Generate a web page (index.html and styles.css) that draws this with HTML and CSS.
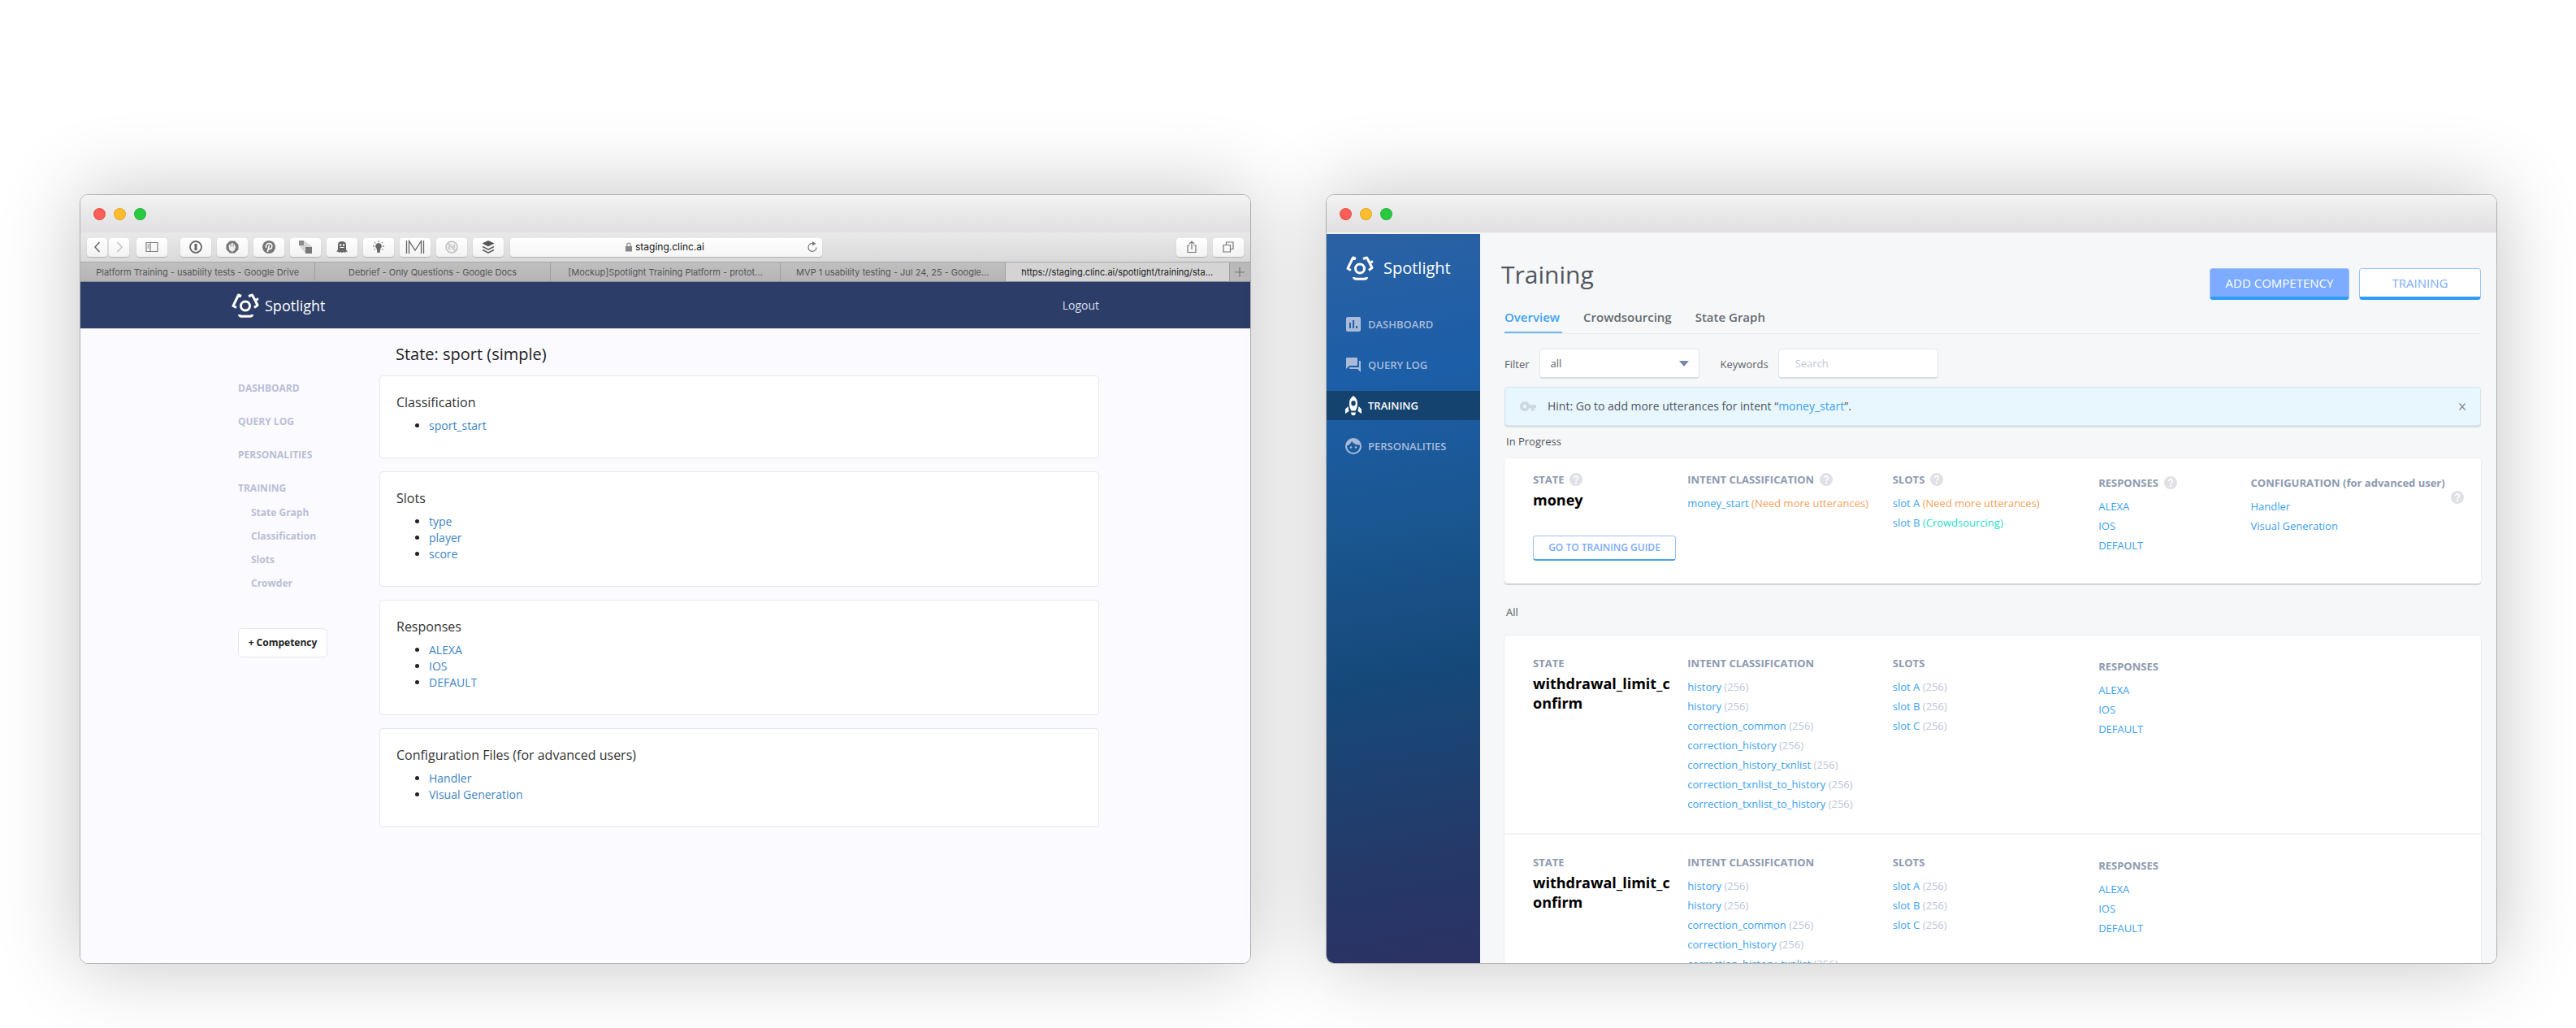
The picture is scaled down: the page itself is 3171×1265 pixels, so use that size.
FILE: index.html
```html
<!DOCTYPE html>
<html lang="en">
<head>
<meta charset="utf-8">
<title>Spotlight Training Platform</title>
<link rel="stylesheet" href="styles.css">
</head>
<body>
<svg class="defs" aria-hidden="true">
  <symbol id="logo" viewBox="0 0 34 30">
    <g fill="none" stroke="#fff" stroke-width="3" stroke-linejoin="round">
      <circle cx="17" cy="15.500" r="5.500"/>
      <path d="M12 3.500L8.500 2 2 15.500l4 2M21 3.500L25.500 2 29 8.500M33 6.500l-4.500 2.500M29 8.500L32 14.500l-4 3"/>
      <path d="M9.500 26q0 2.200 3 2.200h10q3 0 3-2.200"/>
    </g>
  </symbol>
  <symbol id="help" viewBox="0 0 16 16">
    <circle cx="8" cy="8" r="8" fill="#dfe1e6"/>
    <path d="M5.600 6.200a2.400 2.200 0 1 1 3.700 1.800Q8 8.700 8 9.900" fill="none" stroke="#fff" stroke-width="1.600"/>
    <circle cx="8" cy="12.200" r="1.100" fill="#fff"/>
  </symbol>
</svg>

<main class="stage">
  <section class="window" aria-label="Current design">
    <div class="titlebar"><i class="dot red"></i><i class="dot amber"></i><i class="dot green"></i></div>
    <div class="toolbar">
      <div class="history">
        <button class="tool narrow" aria-label="Back"><svg width="16" height="16" viewBox="0 0 16 16"><path d="M10.500 2L5 8l5.500 6" fill="none" stroke="#666" stroke-width="1.500"/></svg></button>
        <button class="tool narrow" aria-label="Forward"><svg width="16" height="16" viewBox="0 0 16 16"><path d="M5.500 2L11 8l-5.500 6" fill="none" stroke="#c2c2c2" stroke-width="1.500"/></svg></button>
      </div>
      <button class="tool sidebar-toggle" aria-label="Sidebar"><svg width="16" height="14" viewBox="0 0 16 14"><path d="M1 1.500h14v11H1zM6 1.500v11M2.500 4h2M2.500 6h2M2.500 8h2" fill="none" stroke="#808080" stroke-width="1.200"/></svg></button>
      <div class="extensions">
        <button class="tool" aria-label="Passwords"><svg width="16" height="16" viewBox="0 0 16 16"><circle cx="8" cy="8" r="7" fill="none" stroke="#666" stroke-width="1.800"/><path d="M6.400 4h3.200v3.500L9 8l.6.600V12H6.400V8.500L7 8l-.6-.6z" fill="#666"/></svg></button>
        <button class="tool" aria-label="Blocker"><svg width="16" height="16" viewBox="0 0 16 16"><path d="M5 .5h6L15.500 5v6L11 15.500H5L.5 11V5z" fill="#777"/><path d="M4.500 8V5M6.500 8V3.500M8.500 8V3M10.500 8V4.500" stroke="#eee" stroke-width="1.500"/><path d="M3.800 7.500h7.400l1.500-1-2 5.500-2 1.500h-2L4 11z" fill="#eee"/></svg></button>
        <button class="tool" aria-label="Pin"><svg width="16" height="16" viewBox="0 0 16 16"><circle cx="8" cy="8" r="8" fill="#777"/><path d="M4.800 8.800C3.500 6 5.500 3.600 8.200 3.600c3.600 0 4.500 3.200 3 5.600-1.200 1.800-3 1.500-3.600.3M8.400 6L6.300 14" fill="none" stroke="#fff" stroke-width="1.600"/></svg></button>
        <button class="tool" aria-label="Transfer"><svg width="18" height="16" viewBox="0 0 18 16"><path d="M1 0h6l10 7v9H9L1 6z" fill="#d6d6d6"/><path d="M1 0h6v6H1z" fill="#8a8a8a"/><path d="M9 8h8v8H9z" fill="#777"/></svg></button>
        <button class="tool" aria-label="Ghost"><svg width="14" height="16" viewBox="0 0 14 16"><path d="M2 5Q2 1 7 1t5 4v6l2 3-2-.5-1 1.500-2-1-2 1-2-1-2 1-1-1.500L0 14l2-3z" fill="#666"/><circle cx="5" cy="5.500" r="1.200" fill="#fff"/><circle cx="9" cy="5.500" r="1.200" fill="#fff"/><path d="M4.500 8.500h5" stroke="#fff"/></svg></button>
        <button class="tool" aria-label="Hints"><svg width="16" height="16" viewBox="0 0 16 16"><path d="M8 3a4 4 0 0 1 2.300 7.200L9.500 15h-3l-.8-4.800A4 4 0 0 1 8 3z" fill="#666"/><path d="M8 0v2M3 2l1.200 1.200M13 2l-1.200 1.200M1 7h2M13 7h2M2.500 11.500L4 10.500M13.500 11.500L12 10.500" stroke="#888" stroke-width="1.300"/></svg></button>
        <button class="tool" aria-label="Mail"><svg width="24" height="18" viewBox="0 0 24 18"><path d="M1.500 17V1M4.500 17V1.500L12 13l7.500-11.500V17M22.500 17V1" fill="none" stroke="#666" stroke-width="1.300"/></svg></button>
        <button class="tool" aria-label="Disabled"><svg width="16" height="16" viewBox="0 0 16 16"><circle cx="8" cy="8" r="7" fill="#eee" stroke="#c0c0c0" stroke-width="1.600"/><path d="M3.500 3.500l9 9M5 11V7M11 5v4" stroke="#c0c0c0" stroke-width="1.500"/></svg></button>
        <button class="tool" aria-label="Layers"><svg width="16" height="16" viewBox="0 0 16 16"><path d="M8 0l7.500 3.500L8 7.200.5 3.500z" fill="#555"/><path d="M1 7.500L8 11l7-3.500M1 11.500L8 15l7-3.500" fill="none" stroke="#666" stroke-width="1.800"/></svg></button>
      </div>
      <div class="address">
        <svg width="10" height="12" viewBox="0 0 10 12"><path d="M1 5h8v6.500H1z" fill="#888"/><path d="M2.800 5V3.200a2.200 2.200 0 0 1 4.400 0V5" fill="none" stroke="#888" stroke-width="1.200"/></svg>
        <input class="address-input" type="text" value="staging.clinc.ai" aria-label="Address">
        <button class="reload" aria-label="Reload"><svg width="14" height="14" viewBox="0 0 14 14"><path d="M8.500 2.600A5 5 0 1 0 12 7.500" fill="none" stroke="#777" stroke-width="1.200"/><path d="M7 0l4.500 3L7 5.500z" fill="#777"/></svg></button>
      </div>
      <div class="window-tools">
        <button class="tool" aria-label="Share"><svg width="14" height="16" viewBox="0 0 14 16"><path d="M4.500 6H2v8.500h10V6H9.500M7 11V1.500M4 4.200l3-3 3 3" fill="none" stroke="#777" stroke-width="1.200"/></svg></button>
        <button class="tool" aria-label="Show tabs"><svg width="14" height="14" viewBox="0 0 14 14"><path d="M1 4.500h8.500V13H1zM4.500 4.500V1H13v8.500H9.500" fill="none" stroke="#777" stroke-width="1.200"/></svg></button>
      </div>
    </div>
    <div class="browser-tabs">
      <button class="browser-tab">Platform Training - usability tests - Google Drive</button>
      <button class="browser-tab">Debrief - Only Questions - Google Docs</button>
      <button class="browser-tab">[Mockup]Spotlight Training Platform - protot...</button>
      <button class="browser-tab">MVP 1 usability testing - Jul 24, 25 - Google...</button>
      <button class="browser-tab current">https://staging.clinc.ai/spotlight/training/sta...</button>
      <button class="new-tab" aria-label="New tab"><svg width="12" height="12" viewBox="0 0 12 12"><path d="M6 0v12M0 6h12" stroke="#777" stroke-width="1.200"/></svg></button>
    </div>
    <div class="old-app">
      <header class="old-nav">
        <div class="container old-nav-row">
          <a class="old-brand" href="#"><svg width="34" height="30"><use href="#logo"/></svg>Spotlight</a>
          <a class="logout" href="#">Logout</a>
        </div>
      </header>
      <div class="container old-layout">
        <nav class="old-side">
          <ul class="old-menu">
            <li><a href="#">DASHBOARD</a></li>
            <li><a href="#">QUERY LOG</a></li>
            <li><a href="#">PERSONALITIES</a></li>
            <li><a href="#">TRAINING</a>
              <ul class="old-submenu">
                <li><a href="#">State Graph</a></li>
                <li><a href="#">Classification</a></li>
                <li><a href="#">Slots</a></li>
                <li><a href="#">Crowder</a></li>
              </ul>
            </li>
          </ul>
          <button class="old-add">+ Competency</button>
        </nav>
        <div class="old-main">
          <h1>State: sport (simple)</h1>
          <section class="panel"><h2>Classification</h2><ul><li><a href="#">sport_start</a></li></ul></section>
          <section class="panel"><h2>Slots</h2><ul><li><a href="#">type</a></li><li><a href="#">player</a></li><li><a href="#">score</a></li></ul></section>
          <section class="panel"><h2>Responses</h2><ul><li><a href="#">ALEXA</a></li><li><a href="#">IOS</a></li><li><a href="#">DEFAULT</a></li></ul></section>
          <section class="panel"><h2>Configuration Files (for advanced users)</h2><ul><li><a href="#">Handler</a></li><li><a href="#">Visual Generation</a></li></ul></section>
        </div>
      </div>
    </div>
  </section>

  <section class="window" aria-label="New design">
    <div class="titlebar"><i class="dot red"></i><i class="dot amber"></i><i class="dot green"></i></div>
    <div class="app">
      <nav class="side">
        <a class="brand" href="#"><svg width="34" height="30"><use href="#logo"/></svg>Spotlight</a>
        <ul class="menu">
          <li><a href="#"><svg width="20" height="20" viewBox="0 0 20 20"><path fill-rule="evenodd" d="M3 1h14q2 0 2 2v14q0 2-2 2H3q-2 0-2-2V3q0-2 2-2zm2 7v7h2V8zm4-3v10h2V5zm4 7v3h2v-3z" fill="#a9bbd9"/></svg>DASHBOARD</a></li>
          <li><a href="#"><svg width="20" height="20" viewBox="0 0 20 20"><path d="M2 1h12q1 0 1 1v8q0 1-1 1H5l-4 4V2q0-1 1-1zM17 5h1q1 0 1 1v13l-4-4H6q-1 0-1-1v-1h12z" fill="#a9bbd9"/></svg>QUERY LOG</a></li>
          <li><a class="active" href="#"><svg width="20" height="24" viewBox="0 0 20 24"><path fill-rule="evenodd" d="M10 0c4 3 5 6 5 9.500 0 4-1 6.500-2.500 9h-5C6 16 5 13.500 5 9.500 5 6 6 3 10 0zm0 6a2.700 3.200 0 1 0 0 6.400A2.700 3.200 0 0 0 10 6z" fill="#fff"/><path d="M3.500 13L0 16.500V22l4.500-3zM16.500 13l3.500 3.500V22l-4.500-3zM7 20.500h6L12 24H8z" fill="#fff"/></svg>TRAINING</a></li>
          <li><a href="#"><svg width="20" height="20" viewBox="0 0 20 20"><circle cx="10" cy="10" r="9" fill="none" stroke="#a9bbd9" stroke-width="2"/><path d="M1 10Q6 8.500 8 4q4 5 10.500 4.500L17 4l-7-3-7 3z" fill="#a9bbd9"/><circle cx="7" cy="11.500" r="1.300" fill="#a9bbd9"/><circle cx="13" cy="11.500" r="1.300" fill="#a9bbd9"/></svg>PERSONALITIES</a></li>
        </ul>
      </nav>
      <div class="content">
        <header class="page-head">
          <h1>Training</h1>
          <div class="actions">
            <button class="btn primary">ADD COMPETENCY</button>
            <button class="btn">TRAINING</button>
          </div>
        </header>
        <div class="page-body">
          <nav class="tabs"><a class="selected" href="#">Overview</a><a href="#">Crowdsourcing</a><a href="#">State Graph</a></nav>
          <form class="filters">
            <label for="filter">Filter</label>
            <select id="filter"><option>all</option></select>
            <label for="keywords">Keywords</label>
            <input id="keywords" type="text" placeholder="Search">
          </form>
          <div class="hint">
            <svg width="20" height="12" viewBox="0 0 20 12"><path fill-rule="evenodd" d="M6 0a6 6 0 0 1 5.600 4H20v4h-2v3.500h-4V8h-2.400A6 6 0 1 1 6 0zm0 3.800a2.200 2.200 0 1 0 0 4.400 2.200 2.200 0 0 0 0-4.400z" fill="#ccd8e0"/></svg>
            <p>Hint: Go to add more utterances for intent “<a href="#">money_start</a>”.</p>
            <button class="close" aria-label="Close"><svg width="8" height="9" viewBox="0 0 8 9"><path d="M.5 0.500l7 8M7.500 0.500l-7 8" stroke="#888" stroke-width="1.200"/></svg></button>
          </div>
          <h2 class="group-title">In Progress</h2>
          <div class="card progress">
            <article class="row">
              <div><h3>STATE <svg width="16" height="16"><use href="#help"/></svg></h3><p class="name">money</p><button class="btn small">GO TO TRAINING GUIDE</button></div>
              <div><h3>INTENT CLASSIFICATION <svg width="16" height="16"><use href="#help"/></svg></h3><ul><li><a href="#">money_start</a> <span class="warn">(Need more utterances)</span></li></ul></div>
              <div><h3>SLOTS <svg width="16" height="16"><use href="#help"/></svg></h3><ul><li><a href="#">slot A</a> <span class="warn">(Need more utterances)</span></li><li><a href="#">slot B</a> <span class="crowd">(Crowdsourcing)</span></li></ul></div>
              <div class="low"><h3>RESPONSES <svg width="16" height="16"><use href="#help"/></svg></h3><ul><li><a href="#">ALEXA</a></li><li><a href="#">IOS</a></li><li><a href="#">DEFAULT</a></li></ul></div>
              <div class="low"><h3 class="long">CONFIGURATION (for advanced user) <svg width="16" height="16"><use href="#help"/></svg></h3><ul><li><a href="#">Handler</a></li><li><a href="#">Visual Generation</a></li></ul></div>
            </article>
          </div>
          <h2 class="group-title all">All</h2>
          <div class="card">
            <article class="row">
              <div><h3>STATE</h3><p class="name">withdrawal_limit_confirm</p></div>
              <div><h3>INTENT CLASSIFICATION</h3><ul><li><a href="#">history</a> (256)</li><li><a href="#">history</a> (256)</li><li><a href="#">correction_common</a> (256)</li><li><a href="#">correction_history</a> (256)</li><li><a href="#">correction_history_txnlist</a> (256)</li><li><a href="#">correction_txnlist_to_history</a> (256)</li><li><a href="#">correction_txnlist_to_history</a> (256)</li></ul></div>
              <div><h3>SLOTS</h3><ul><li><a href="#">slot A</a> (256)</li><li><a href="#">slot B</a> (256)</li><li><a href="#">slot C</a> (256)</li></ul></div>
              <div class="low"><h3>RESPONSES</h3><ul><li><a href="#">ALEXA</a></li><li><a href="#">IOS</a></li><li><a href="#">DEFAULT</a></li></ul></div>
            </article>
            <article class="row">
              <div><h3>STATE</h3><p class="name">withdrawal_limit_confirm</p></div>
              <div><h3>INTENT CLASSIFICATION</h3><ul><li><a href="#">history</a> (256)</li><li><a href="#">history</a> (256)</li><li><a href="#">correction_common</a> (256)</li><li><a href="#">correction_history</a> (256)</li><li><a href="#">correction_history_txnlist</a> (256)</li></ul></div>
              <div><h3>SLOTS</h3><ul><li><a href="#">slot A</a> (256)</li><li><a href="#">slot B</a> (256)</li><li><a href="#">slot C</a> (256)</li></ul></div>
              <div class="low"><h3>RESPONSES</h3><ul><li><a href="#">ALEXA</a></li><li><a href="#">IOS</a></li><li><a href="#">DEFAULT</a></li></ul></div>
            </article>
          </div>
        </div>
      </div>
    </div>
  </section>
</main>
</body>
</html>
```
FILE: styles.css
```css
* { box-sizing: border-box; }
body {
  margin: 0;
  background: #fff;
  font: 14px/20px "Open Sans", "Noto Sans", sans-serif;
  color: #222;
}
h1, h2, h3, p, ul { margin: 0; padding: 0; }
h1, h2 { font-weight: 400; }
ul { list-style: none; }
a { text-decoration: none; color: inherit; }
button, input, select { font: inherit; margin: 0; padding: 0; border: 0; color: inherit; }
svg { flex: none; }
.defs { display: none; }

/* Two desktop windows side by side */
.stage {
  display: grid;
  grid-template-columns: minmax(0, 1fr) minmax(0, 1fr);
  grid-template-rows: minmax(0, 1fr);
  gap: 92px;
  height: 100vh;
  padding: 239px 97px 79px 98px;
}
.window {
  display: flex;
  flex-direction: column;
  overflow: hidden;
  border: 1px solid #b0b0b0;
  border-radius: 10px;
  box-shadow: 0 0 100px rgba(0, 0, 0, .24);
}
.titlebar {
  display: flex;
  flex: none;
  align-items: center;
  gap: 10px;
  height: 46px;
  padding-left: 16px;
  background: linear-gradient(#f3f3f3, #e1dfe1);
}
.dot { width: 15px; height: 15px; border-radius: 50%; border: 1px solid rgba(0, 0, 0, .12); }
.red { background: #ff5f57; }
.amber { background: #ffbd2e; }
.green { background: #28cb40; }

/* Browser chrome */
.toolbar {
  display: flex;
  flex: none;
  align-items: center;
  height: 37px;
  padding: 0 8px;
  background: linear-gradient(#e9e9e9, #d9d9d9);
  border-bottom: 1px solid #a8a8a8;
}
.tool {
  display: flex;
  align-items: center;
  justify-content: center;
  width: 38px;
  height: 23px;
  border-radius: 4px;
  background: linear-gradient(#fff, #f3f3f3);
  box-shadow: 0 1px 1px rgba(0, 0, 0, .2);
}
.narrow { width: 25px; }
.history { display: flex; gap: 2px; }
.sidebar-toggle { margin: 0 16px 0 9px; }
.extensions { display: flex; gap: 7px; }
.window-tools { display: flex; gap: 7px; margin-left: auto; }
.address {
  display: flex;
  flex: 0 1 384px;
  align-items: center;
  justify-content: center;
  gap: 3px;
  height: 23px;
  margin-left: 8px;
  padding-left: 18px;
  border-radius: 4px;
  background: linear-gradient(#fff, #f5f5f5);
  box-shadow: 0 1px 1px rgba(0, 0, 0, .2);
}
.address svg:first-child { margin-left: auto; }
.address-input { field-sizing: content; background: none; font: 12px/20px Inter, sans-serif; color: #111; }
.reload { display: flex; margin: 0 5px 0 auto; background: none; }
.browser-tabs { display: flex; flex: none; height: 24px; background: #b9b9b9; border-bottom: 1px solid #8a8f9c; }
.browser-tab {
  flex: 284 1 0;
  min-width: 0;
  overflow: hidden;
  background: linear-gradient(#bfbfbf, #b5b5b5);
  border-right: 1px solid #a0a0a0;
  font: 11px/20px Inter, sans-serif;
  color: #555;
  white-space: nowrap;
}
.current { background: #d4d4d4; color: #222; }
.browser-tab:nth-child(-n+2) { flex-grow: 290; }
.browser-tab:nth-child(n+4) { flex-grow: 277; }
.new-tab { display: flex; align-items: center; justify-content: center; width: 25px; background: none; }

/* Current application */
.old-app { flex: 1; background: #fbfaff; }
.container { width: 75%; max-width: 1068px; margin: 0 auto; }
.old-nav { background: #2c3e68; border-bottom: 1px solid #dfe2ee; }
.old-nav-row { display: flex; align-items: center; justify-content: space-between; height: 57px; }
.old-brand { display: flex; align-items: center; gap: 7px; font-size: 18px; font-weight: 500; color: #fff; }
.logout { color: #d9dfee; }
.old-layout { display: grid; grid-template-columns: 182px minmax(0, 1fr); }
.old-side { padding: 63px 0 0 8px; font-size: 12px; font-weight: 700; color: #b9bfd5; }
.old-menu { display: grid; gap: 21px; }
.old-submenu { padding: 5px 0 0 16px; line-height: 29px; }
.old-add {
  width: 110px;
  height: 36px;
  margin-top: 41px;
  border: 1px solid #e2e7f5;
  border-radius: 5px;
  background: #fff;
  font-weight: 700;
  color: #222;
}
.old-main { display: grid; gap: 16px; align-content: start; padding-top: 16px; }
.old-main h1 { margin-bottom: -5px; padding-left: 20px; font-size: 20px; line-height: 30px; }
.panel { padding: 20px 20px 29px; border: 1px solid #e2e7f5; border-radius: 4px; background: #fff; }
.panel h2 { margin-bottom: 7px; font-size: 16px; line-height: 24px; color: #333; }
.panel ul { padding-left: 40px; list-style: disc; }
.panel a { color: #3d85c6; }

/* Redesigned application */
.app {
  display: grid;
  flex: 1;
  grid-template-columns: 189px minmax(0, 1fr);
  grid-template-rows: minmax(0, 1fr);
  min-height: 0;
  border-top: 2px solid #f5f5f5;
  background: #f5f7f9;
}
.side {
  padding-top: 22px;
  background: linear-gradient(170deg, #2b61a3 0%, #1c5ea8 20%, #1a5690 40%, #15497a 60%, #243a69 84%, #2b3163 100%);
}
.brand { display: flex; align-items: center; gap: 12px; height: 40px; margin-bottom: 31px; padding-left: 24px; font-size: 20px; color: #fff; }
.menu { display: grid; gap: 14px; font-size: 13px; font-weight: 600; color: #a9bbd9; }
.menu a { display: flex; align-items: center; gap: 8px; height: 36px; padding-left: 23px; }
.menu .active { background: #15436f; color: #fff; }
.content { overflow: hidden; padding: 30px 19px 0 26px; }
.page-head { display: flex; justify-content: space-between; }
.page-head h1 { font-size: 30px; line-height: 40px; color: #50565c; }
.actions { display: flex; gap: 12px; margin-top: 12px; }
.btn {
  width: 150px;
  height: 39px;
  border: 1px solid #9cc3fc;
  border-bottom: 4px solid #2f9df6;
  border-radius: 4px;
  background: #fff;
  font-size: 15px;
  font-weight: 500;
  color: #7cabff;
}
.primary { width: 172px; background: #7cabff; color: #fff; }
.small { width: 176px; height: 31px; margin-top: 32px; border-bottom: 2px solid #4ba3ee; font-size: 12px; font-weight: 600; }
.page-body { padding-left: 4px; }
.tabs { display: flex; gap: 26px; height: 42px; padding-top: 6px; border-bottom: 1px solid #e6e9ec; font-size: 15px; font-weight: 600; line-height: 30px; color: #656b71; }
.tabs a { padding-right: 3px; border-bottom: 2px solid transparent; }
.tabs .selected { color: #3ba2f2; border-color: #6cb8f3; }
.filters { display: flex; align-items: center; padding-top: 18px; font-size: 13px; color: #5c6268; }
.filters select, .filters input {
  width: 197px;
  height: 37px;
  margin: 0 26px 0 12px;
  padding: 0 13px;
  border: 1px solid #e3e7ee;
  border-bottom: 2px solid #d6dee7;
  border-radius: 4px;
  background: #fff;
}
.filters select {
  appearance: none;
  background: #fff url('data:image/svg+xml,<svg xmlns="http://www.w3.org/2000/svg" width="12" height="7"><path d="M0 0h12L6 7z" fill="%237387ad"/></svg>') no-repeat right 12px center;
}
.filters input { padding-left: 20px; }
.filters input::placeholder { color: #bccad8; }
.hint {
  display: flex;
  align-items: center;
  gap: 14px;
  height: 48px;
  margin-top: 10px;
  padding: 0 18px;
  border: 1px solid #d6e4ec;
  border-radius: 4px;
  background: #e8f6fe;
  box-shadow: 0 2px 1px rgba(0, 0, 0, .1);
  color: #50565c;
}
.hint a { color: #3ba2f2; }
.close { display: flex; margin-left: auto; background: none; }
.group-title { margin: 9px 0 11px; padding-left: 2px; font-size: 13px; color: #50565c; }
.all { margin: 25px 0 19px; }
.card { border-radius: 4px; background: #fff; box-shadow: 0 2px 1px rgba(0, 0, 0, .14), 0 0 2px rgba(0, 0, 0, .1); }
.row {
  display: grid;
  grid-template-columns: 190fr 252fr 253fr 187fr 283fr;
  padding: 24px 0 24px 35px;
  border-bottom: 2px solid #f1f2f5;
}
.progress .row { padding: 16px 0 28px 35px; border-bottom: 0; }
.low { padding-top: 4px; }
.row h3 { display: flex; align-items: center; gap: 7px; margin-bottom: 7px; font-size: 13px; font-weight: 700; color: #8d9ab0; white-space: nowrap; }
.row .long svg { margin-top: 18px; margin-bottom: -18px; }
.row ul { font-size: 13px; line-height: 24px; color: #bcc6da; }
.row li { white-space: nowrap; }
.row li a { color: #3ba2f2; }
.row .warn { color: #f5a25d; }
.row .crowd { color: #1fdcc8; }
.name { width: 172px; margin-top: -4px; font-size: 18px; font-weight: 700; line-height: 24px; color: #000; overflow-wrap: anywhere; }
```
